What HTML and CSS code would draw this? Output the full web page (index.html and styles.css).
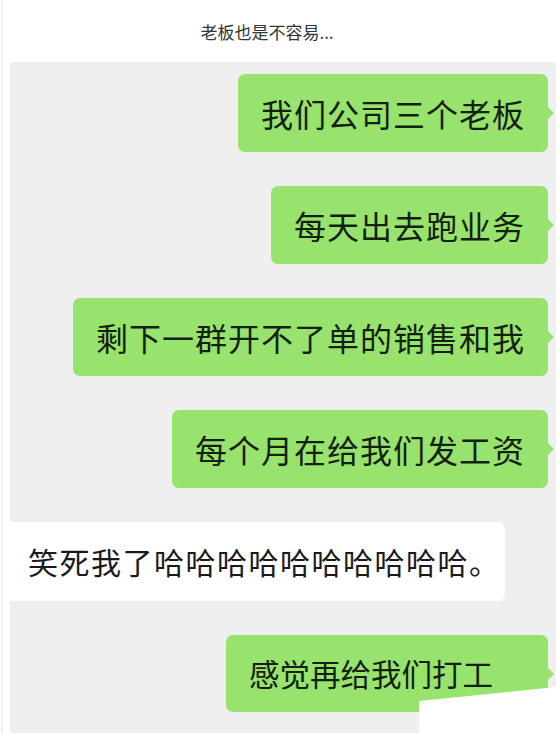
FILE: index.html
```html
<!doctype html>
<html>
	<head>
		<meta charset="utf-8">
		<title>老板也是不容易</title>
		<meta name="viewport" content="width=device-width,initial-scale=1" />
		<link rel="stylesheet" href="styles.css">
	</head>
	<body>
		<div class="page">
			<h1 class="title">老板也是不容易...</h1>
			<div class="chat">
				<div class="row mine"><span class="bubble green b1">我们公司三个老板</span></div>
				<div class="row mine"><span class="bubble green">每天出去跑业务</span></div>
				<div class="row mine"><span class="bubble green">剩下一群开不了单的销售和我</span></div>
				<div class="row mine"><span class="bubble green">每个月在给我们发工资</span></div>
				<div class="row other"><span class="bubble white">笑死我了哈哈哈哈哈哈哈哈哈哈。</span></div>
				<div class="row mine"><span class="bubble green last">感觉再给我们打工</span></div>
				<div class="cover"></div>
			</div>
		</div>
	</body>
</html>
```

FILE: styles.css
```css
* {
	margin: 0;
	padding: 0;
	box-sizing: border-box;
}
body{
	background-color: #fff;
	font-family: "Noto Sans CJK SC", "Noto Sans", sans-serif;
}
.page{
	margin-left: 1px;
	border-left: 2px solid #f6eee2;
	padding-left: 7px;
	height: 734px;
	overflow: hidden;
}
.title{
	font-size: 17px;
	font-weight: normal;
	color: #333;
	text-align: center;
	padding: 19px 32px 0 0;
	height: 62px;
	line-height: 26px;
}
.chat{
	position: relative;
	background-color: #efefef;
	padding: 12px 0 23px 0;
	display: flex;
	flex-direction: column;
	gap: 34px;
	height: 671px;
	overflow: hidden;
}
.row{
	display: flex;
}
.row.mine{
	justify-content: flex-end;
	padding-right: 8px;
}
.row.other{
	justify-content: flex-start;
}
.bubble{
	position: relative;
	display: inline-block;
	height: 78px;
	line-height: 78px;
	font-size: 32px;
	letter-spacing: 1px;
	white-space: nowrap;
	border-radius: 7px;
}
.green{
	background-color: #98e26e;
	color: #132210;
	padding: 0 23px 0 23px;
}
.green::after{
	content: "";
	position: absolute;
	right: -6px;
	top: 33px;
	border-top: 6px solid transparent;
	border-bottom: 6px solid transparent;
	border-left: 6px solid #98e26e;
}
.white{
	background-color: #fff;
	color: #1a1a1a;
	height: 79px;
	line-height: 79px;
	font-size: 30px;
	letter-spacing: 1.5px;
	padding: 0 4px 0 18px;
	border-radius: 0 7px 7px 0;
}
.last{
	font-size: 30.5px;
	letter-spacing: 0;
	padding: 0 55px 0 23px;
	height: 77px;
	line-height: 77px;
}
.cover{
	position: absolute;
	right: 0;
	bottom: 0;
	width: 137px;
	height: 46px;
	background-color: #fff;
	clip-path: polygon(0 14px, 100% 0, 100% 100%, 0 100%);
}
```
